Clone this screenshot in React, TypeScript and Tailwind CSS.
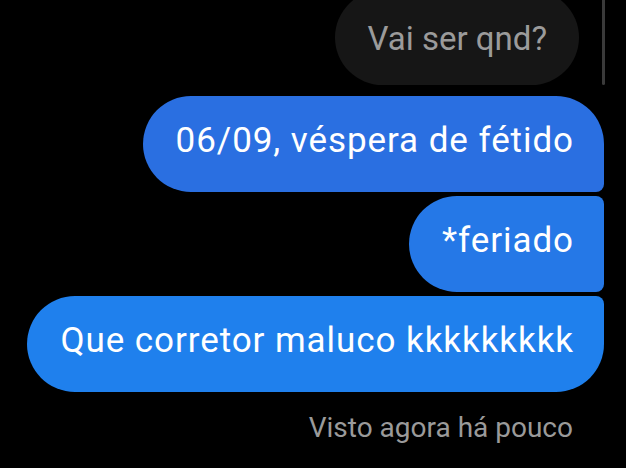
import React from "react";

const font = { fontFamily: "Roboto, 'Noto Sans', sans-serif" };

export default function App() {
  return (
    <div
      className="relative w-[626px] h-[468px] bg-black overflow-hidden"
      style={font}
    >
      {/* scroll indicator */}
      <div className="absolute left-[602px] top-0 w-[3px] h-[85px] bg-[#3a3a3a] rounded-b-sm" />

      <div className="flex flex-col items-end pr-[22px]">
        {/* incoming message */}
        <div className="mt-[-10px] mr-[25px] h-[95px] px-[32px] pt-[2px] flex items-center rounded-full bg-[#161616] text-[#9b9b9b] text-[33px]">
          Vai ser qnd?
        </div>

        {/* outgoing group */}
        <div className="mt-[11px] flex flex-col items-end gap-[4px]">
          <div className="h-[96px] pl-[33px] pr-[30px] pb-[6px] flex items-center rounded-l-[48px] rounded-tr-[48px] rounded-br-[8px] bg-[#2a6fe1] text-white text-[35px] tracking-[0.93px]">
            06/09, véspera de fétido
          </div>
          <div className="h-[96px] pl-[33px] pr-[30px] pb-[6px] flex items-center rounded-l-[48px] rounded-r-[8px] bg-[#2578e7] text-white text-[35px] tracking-[0.93px]">
            *feriado
          </div>
          <div className="h-[96px] pl-[33px] pr-[30px] pb-[6px] flex items-center rounded-l-[48px] rounded-tr-[8px] rounded-br-[48px] bg-[#1f80ed] text-white text-[35px] tracking-[0.93px]">
            Que corretor maluco kkkkkkkkk
          </div>
        </div>

        <div className="mt-[20px] mr-[31px] text-[28px] leading-[32px] text-[#9a9a9a]">
          Visto agora há pouco
        </div>
      </div>
    </div>
  );
}
